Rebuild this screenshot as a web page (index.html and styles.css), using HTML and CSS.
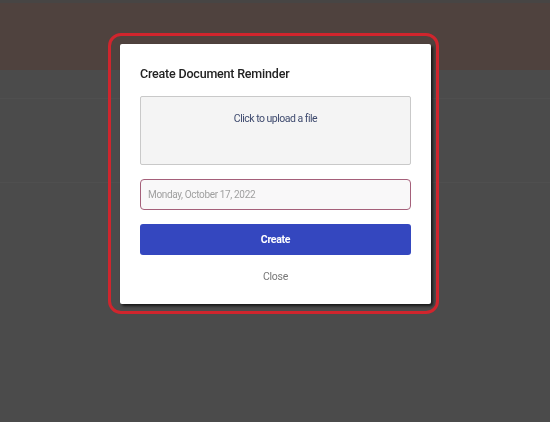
FILE: index.html
```html
<!DOCTYPE html>
<html lang="en">

<head>
  <meta charset="UTF-8">
  <meta name="viewport" content="width=device-width, initial-scale=1.0">
  <title>Document Reminder</title>
  <link rel="stylesheet" href="styles.css">
</head>

<body>

  <!-- 页面背景 -->
  <div class="page">
    <div class="topbar"></div>
    <div class="row"></div>
    <div class="row"></div>
  </div>

  <!-- 弹窗遮罩 -->
  <div class="overlay">
    <div class="focus-ring">
      <div class="modal">
        <h2 class="modal-title">Create Document Reminder</h2>

        <div class="upload">Click to upload a file</div>

        <input class="date-input" type="text" placeholder="Monday, October 17, 2022">

        <button class="btn-create">Create</button>

        <div class="btn-close">Close</div>
      </div>
    </div>
  </div>

</body>

</html>
```

FILE: styles.css
```css
* {
  margin: 0;
  padding: 0;
  box-sizing: border-box;
}

body {
  background-color: #4b4b4b;
  font-family: Roboto, "Liberation Sans", sans-serif;
  height: 422px;
  overflow: hidden;
}

/* 背景页面 */
.page {
  height: 100%;
}

.topbar {
  height: 70px;
  background-color: #4f423e;
  border-top: 3px solid #474544;
}

.row {
  height: 29px;
  border-bottom: 1px solid #4f4f4f;
}

.row + .row {
  height: 84px;
}

/* 遮罩 */
.overlay {
  position: fixed;
  left: 0;
  top: 0;
  right: 0;
  bottom: 0;
  display: flex;
  justify-content: center;
  align-items: flex-start;
  padding-top: 33px;
  padding-right: 3px;
}

.focus-ring {
  border: 3px solid #d0252d;
  border-radius: 13px;
  padding: 8px 5px 7px 9px;
}

.modal {
  width: 311px;
  height: 260px;
  background-color: #fff;
  border-radius: 2px;
  box-shadow: 2px 2px 3px rgba(0, 0, 0, .7);
  padding: 22px 20px 0;
  display: flex;
  flex-direction: column;
}

.modal-title {
  font-size: 12.5px;
  font-weight: 500;
  letter-spacing: -0.2px;
  color: #222;
  line-height: 16px;
  margin-bottom: 14px;
}

.upload {
  height: 69px;
  background-color: #f4f4f4;
  border: 1px solid #c9c9c9;
  border-radius: 2px;
  text-align: center;
  padding-top: 15px;
  font-size: 10.5px;
  letter-spacing: -0.5px;
  color: #3e4a6e;
  margin-bottom: 14px;
}

.date-input {
  height: 31px;
  border: 1px solid #a5607a;
  border-radius: 4px;
  background-color: #f9f8f9;
  padding-left: 7px;
  font-family: inherit;
  font-size: 10px;
  letter-spacing: -0.35px;
  margin-bottom: 14px;
  outline: none;
}

.date-input::placeholder {
  color: #a0a0a0;
}

.btn-create {
  height: 31px;
  border: 0;
  border-radius: 3px;
  background-color: #3447bf;
  color: #fff;
  font-family: inherit;
  font-weight: 700;
  font-size: 10.5px;
  letter-spacing: -0.3px;
  margin-bottom: 15px;
}

.btn-close {
  text-align: center;
  font-size: 10.5px;
  letter-spacing: -0.3px;
  color: #777;
}
```
